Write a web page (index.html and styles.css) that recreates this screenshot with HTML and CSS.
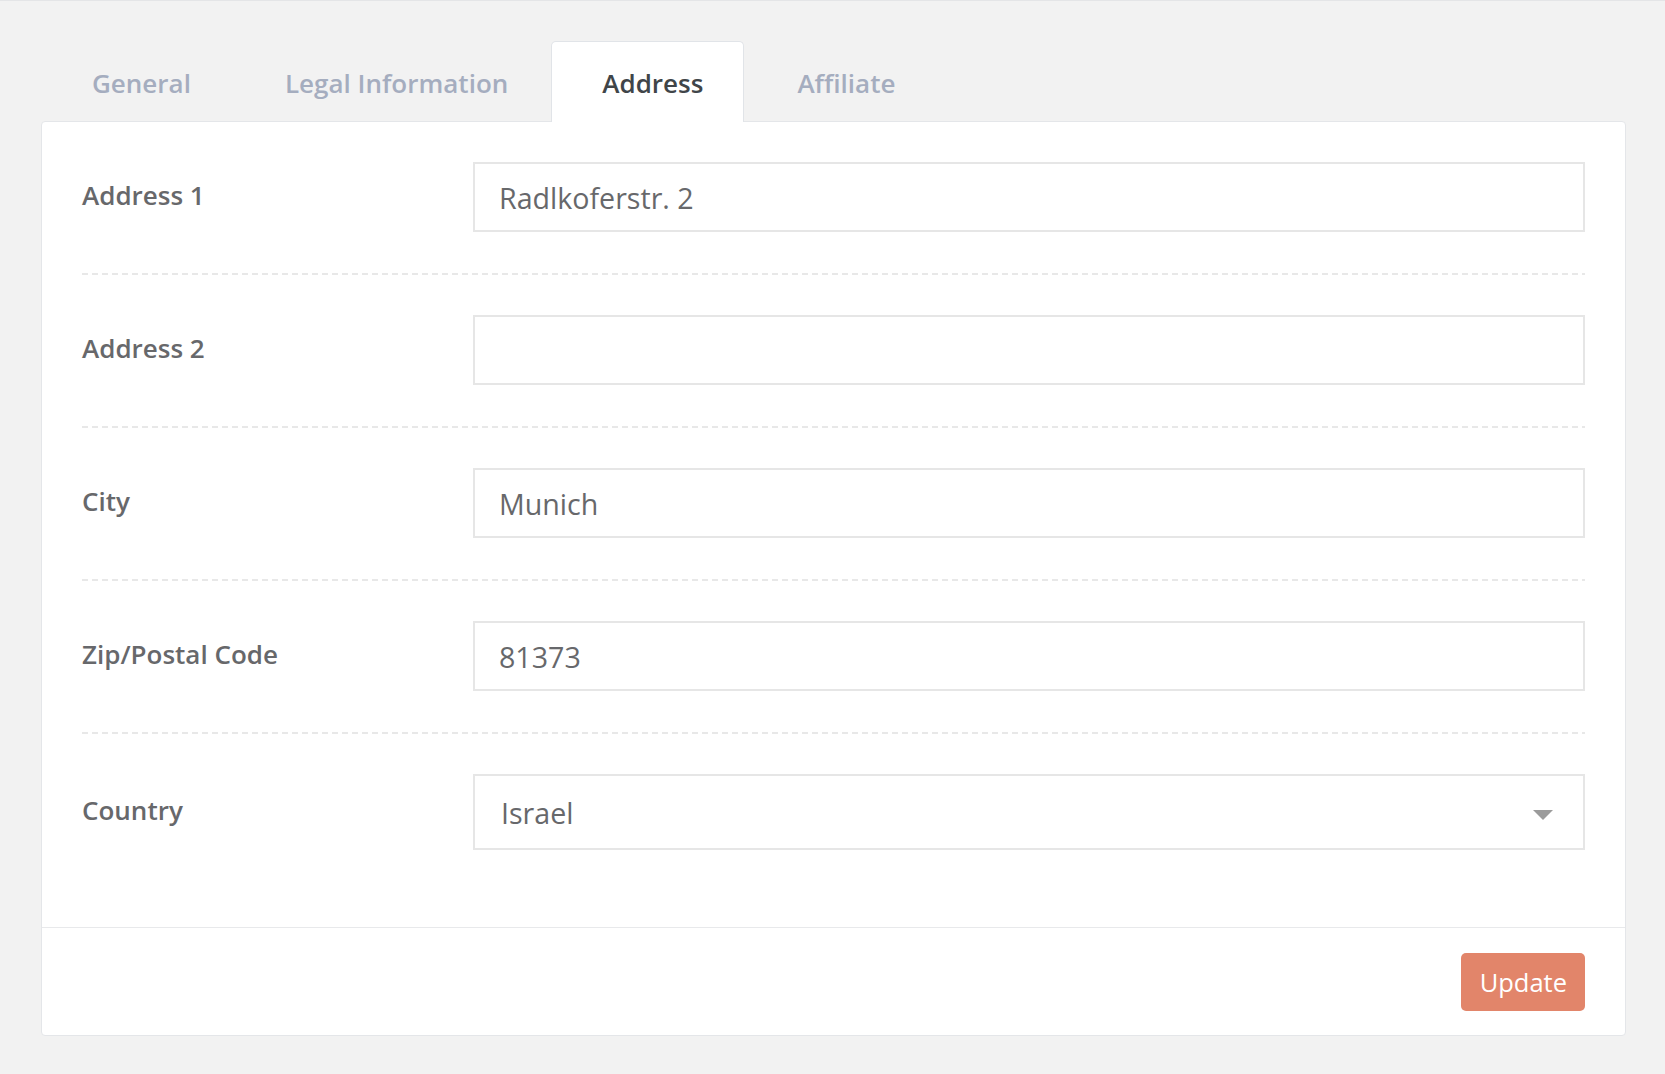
FILE: index.html
```html
<!DOCTYPE html>
<html lang="en">
<head>
<meta charset="utf-8">
<title>Address</title>
<link rel="stylesheet" href="styles.css">
</head>
<body>
<div class="page">
  <div class="tabs">
    <div class="tab">General</div>
    <div class="tab">Legal Information</div>
    <div class="tab active">Address</div>
    <div class="tab">Affiliate</div>
  </div>
  <div class="card">
    <div class="card-body">
      <div class="row">
        <label class="label">Address 1</label>
        <div class="input">Radlkoferstr. 2</div>
      </div>
      <div class="sep"></div>
      <div class="row">
        <label class="label">Address 2</label>
        <div class="input"></div>
      </div>
      <div class="sep"></div>
      <div class="row">
        <label class="label">City</label>
        <div class="input">Munich</div>
      </div>
      <div class="sep"></div>
      <div class="row">
        <label class="label">Zip/Postal Code</label>
        <div class="input">81373</div>
      </div>
      <div class="sep"></div>
      <div class="row last">
        <label class="label">Country</label>
        <div class="select">
          <span>Israel</span>
          <svg class="caret" width="20" height="10" viewBox="0 0 20 10"><path d="M0 0 H20 L10 10 Z" fill="#9b9b9b"/></svg>
        </div>
      </div>
    </div>
    <div class="card-footer">
      <button class="btn">Update</button>
    </div>
  </div>
</div>
</body>
</html>
```

FILE: styles.css
```css
html, body {
  margin: 0;
  padding: 0;
}
body {
  background: #f2f2f2;
  border-top: 1px solid #e4e5e7;
  font-family: "Open Sans", "Noto Sans", sans-serif;
  min-height: 1073px;
  box-sizing: border-box;
}
.page {
  padding: 40px 39px 0 41px;
}
.tabs {
  display: flex;
  height: 80px;
}
.tab {
  box-sizing: border-box;
  height: 81px;
  padding: 24px 40px 0 50px;
  margin-right: 2px;
  font-size: 26px;
  line-height: 35px;
  font-weight: 600;
  color: #a5adbf;
  border: 1px solid transparent;
  border-bottom: none;
  border-radius: 5px 5px 0 0;
  position: relative;
  z-index: 1;
}
.tab.active {
  background: #ffffff;
  border-color: #e1e4e8;
  color: #404549;
}
.card {
  background: #ffffff;
  border: 1px solid #e4e6e9;
  border-radius: 4px;
}
.card-body {
  padding: 0 40px 36px 40px;
}
.row {
  display: grid;
  grid-template-columns: 391px 1fr;
  align-items: center;
  padding: 40px 0 41px;
}
.row.last {
  padding-bottom: 41px;
}
.label {
  font-size: 26px;
  font-weight: 600;
  color: #67686b;
  margin-bottom: 4px;
}
.input {
  box-sizing: border-box;
  height: 70px;
  border: 2px solid #e6e6e6;
  padding: 0 24px;
  font-size: 28.6px;
  color: #67686b;
  display: flex;
  align-items: center;
}
.select {
  box-sizing: border-box;
  height: 76px;
  border: 2px solid #e6e6e6;
  padding: 0 30px 0 26px;
  font-size: 28.6px;
  color: #67686b;
  display: flex;
  align-items: center;
  justify-content: space-between;
}
.caret {
  margin-top: 6px;
}
.sep {
  height: 2px;
  background-image: repeating-linear-gradient(to right, #e8e8e8 0, #e8e8e8 6px, transparent 6px, transparent 10px);
}
.card-footer {
  border-top: 1px solid #e8e9eb;
  padding: 25px 40px 24px;
  display: flex;
  justify-content: flex-end;
}
.btn {
  height: 58px;
  padding: 0 18px 0 19px;
  border: none;
  border-radius: 5px;
  background: #e2856a;
  color: #ffffff;
  font-family: "Open Sans", "Noto Sans", sans-serif;
  font-size: 25.5px;
  font-weight: 400;
}
```
